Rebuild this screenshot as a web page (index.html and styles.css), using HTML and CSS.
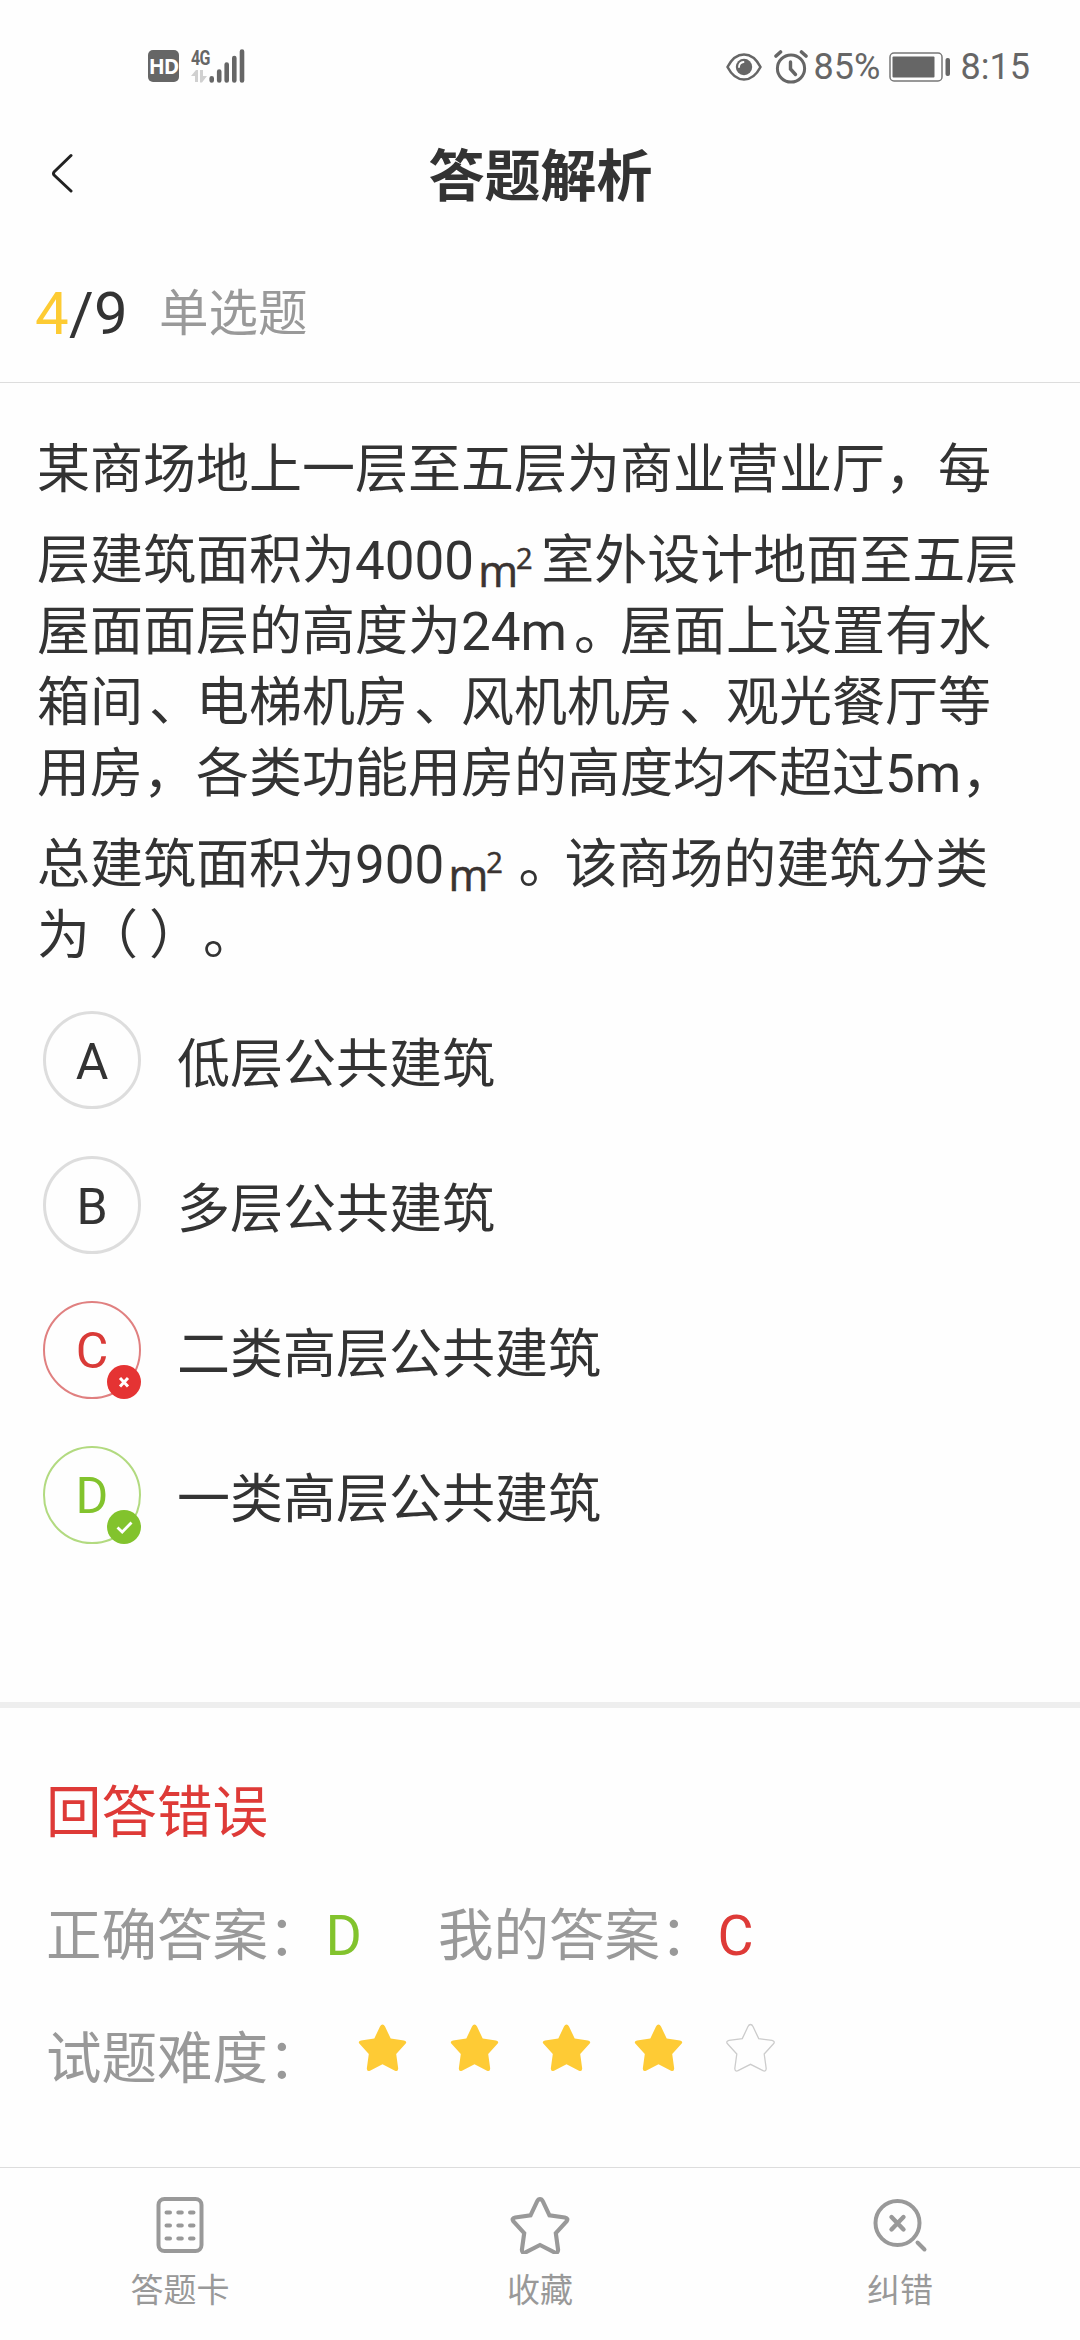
FILE: index.html
```html
<!DOCTYPE html>
<html lang="zh-CN">
<head>
<meta charset="utf-8">
<title>答题解析</title>
<link rel="stylesheet" href="styles.css">
</head>
<body>
<svg width="0" height="0" class="defs">
  <defs>
    <path id="star" d="M24.500 1.500 Q26 1.500 27 3.500 L32.700 15.600 L46 17.400 Q49.500 18.200 47.500 20.800 L38.200 31 L40.200 45.500 Q40 49 37 47.700 L24.500 41.300 L12 47.700 Q9 49 8.800 45.500 L10.800 31 L1.500 20.800 Q-.5 18.200 3 17.400 L16.300 15.600 L22 3.500 Q23 1.500 24.500 1.500Z"/>
  </defs>
</svg>
<div class="screen">
  <header class="status">
    <div class="status-left">
      <span class="hd">HD</span>
      <div class="network">
        <span class="net-label">4G</span>
        <svg width="16" height="13" viewBox="0 0 16 13" fill="#d0d0d0"><path d="M7 0V12H4V6H0L5 0ZM9 0H12V6H16L11 12.500H9Z"/></svg>
      </div>
      <svg class="bars" width="36" height="34" viewBox="0 0 36 34" stroke="#666" stroke-width="4.600" stroke-linecap="round"><path d="M2.700 29.300V31.500M10.200 22.500V31.500M17.700 15.500V31.500M25.300 9V31.500M33 2.500V31.500"/></svg>
    </div>
    <div class="status-right">
      <svg class="eye" width="36" height="28" viewBox="0 0 36 28"><path d="M1.500 14Q8 1.500 18 1.500T34.500 14Q28 26.500 18 26.500T1.500 14Z" fill="none" stroke="#666" stroke-width="2.600" stroke-linejoin="round"/><circle cx="18" cy="14" r="8.200" fill="#666"/><path d="M13 14Q13.200 9.500 17.500 9" fill="none" stroke="#fff" stroke-width="1.800" stroke-linecap="round"/></svg>
      <svg class="alarm" width="34" height="34" viewBox="0 0 34 34" fill="none" stroke="#666" stroke-width="3" stroke-linecap="round"><circle cx="17" cy="18.500" r="13.600"/><path d="M16.500 12V19L21.500 24.500" stroke-width="3.400"/><path d="M2 6L6.500 2M27.500 2L32 6" stroke-width="3.600"/></svg>
      <span class="battery-text">85%</span>
      <svg class="battery" width="62" height="30" viewBox="0 0 62 30"><rect x="1" y="1" width="52" height="28" rx="4" fill="none" stroke="#777" stroke-width="1.500"/><rect x="3.500" y="4.500" width="42" height="21" rx="1" fill="#666"/><rect x="56.500" y="6" width="4.500" height="18" rx="2" fill="#666"/></svg>
      <span>8:15</span>
    </div>
  </header>

  <nav class="titlebar">
    <svg class="back" width="22" height="40" viewBox="0 0 22 40" fill="none" stroke="#222" stroke-width="3" stroke-linecap="round" stroke-linejoin="round"><path d="M20 2.500L3 19Q2 20.500 3 22L20 38"/></svg>
    <h1>答题解析</h1>
  </nav>

  <section class="progress">
    <span class="count"><span class="current">4</span>/9</span>
    <span class="kind">单选题</span>
  </section>

  <main class="question">
    <p class="stem">
      <span class="line">某商场地上一层至五层为商业营业厅，每</span>
      <span class="line tall">层建筑面积为4000<span class="unit">m<sup>2</sup></span>室外设计地面至五层</span>
      <span class="line">屋面面层的高度为24m<span class="stop">。</span>屋面上设置有水</span>
      <span class="line">箱间<span class="pause">、</span>电梯机房<span class="pause">、</span>风机机房<span class="pause">、</span>观光餐厅等</span>
      <span class="line">用房，各类功能用房的高度均不超过5m，</span>
      <span class="line tall">总建筑面积为900<span class="unit">m<sup>2</sup></span><span class="stop">。</span>该商场的建筑分类</span>
      <span class="line">为<span class="open">（</span><span class="close">）</span><span class="stop">。</span></span>
    </p>
    <ul class="options">
      <li><span class="mark">A</span><span class="choice">低层公共建筑</span></li>
      <li><span class="mark">B</span><span class="choice">多层公共建筑</span></li>
      <li><span class="mark wrong">C<svg class="badge" viewBox="0 0 34 34"><circle cx="17" cy="17" r="17" fill="#e53333"/><path d="M13 13L21 21.500M21 13L13 21.500" stroke="#fff" stroke-width="3"/></svg></span><span class="choice">二类高层公共建筑</span></li>
      <li><span class="mark right">D<svg class="badge" viewBox="0 0 34 34"><circle cx="17" cy="17" r="17" fill="#82c32d"/><path d="M10.500 17.500L15.200 22L24.500 12.500" fill="none" stroke="#fff" stroke-width="2.800"/></svg></span><span class="choice">一类高层公共建筑</span></li>
    </ul>
  </main>

  <section class="result">
    <div class="row red">回答错误</div>
    <div class="row answers"><span>正确答案：<b class="green">D</b></span><span>我的答案：<b class="red">C</b></span></div>
    <div class="row difficulty"><span>试题难度：</span>
      <div class="stars">
        <svg viewBox="0 0 49 50"><use href="#star"/></svg>
        <svg viewBox="0 0 49 50"><use href="#star"/></svg>
        <svg viewBox="0 0 49 50"><use href="#star"/></svg>
        <svg viewBox="0 0 49 50"><use href="#star"/></svg>
        <svg class="empty" viewBox="0 0 49 50"><use href="#star"/></svg>
      </div>
    </div>
  </section>

  <footer class="tabs">
    <div class="tab">
      <svg width="60" height="58" viewBox="0 0 60 58" fill="none" stroke="#999" stroke-width="4"><rect x="8.500" y="3" width="43" height="52" rx="6"/><path d="M16.500 16.500h3.500M28.300 16.500h3.500M40 16.500h3.500M16.500 29.500h3.500M28.300 29.500h3.500M40 29.500h3.500M16.500 42.500h3.500M28.300 42.500h3.500M40 42.500h3.500" stroke-linecap="round"/></svg>
      <span>答题卡</span>
    </div>
    <div class="tab">
      <svg width="60" height="58" viewBox="-1.500 -1.200 52 50.300" fill="none" stroke="#999" stroke-width="3.600"><use href="#star"/></svg>
      <span>收藏</span>
    </div>
    <div class="tab">
      <svg width="60" height="58" viewBox="0 0 60 58" fill="none" stroke="#999" stroke-width="4" stroke-linecap="round"><circle cx="27.500" cy="27" r="22"/><path d="M21.500 21L33.500 33.500M33.500 21L21.500 33.500" stroke-width="4.400"/><path d="M47.500 46.500L54.500 53.500"/></svg>
      <span>纠错</span>
    </div>
  </footer>
</div>
</body>
</html>
```
FILE: styles.css
```css
* { box-sizing: border-box; margin: 0; padding: 0; }
body {
  background: #fefefe;
  color: #333;
  font-family: Roboto, "Noto Sans CJK SC", sans-serif;
  text-spacing-trim: space-all;
}
.defs { position: absolute; }
svg { display: block; flex: none; }
.screen { width: 1080px; height: 2340px; display: flex; flex-direction: column; overflow: hidden; }

.status {
  height: 112px;
  padding: 20px 50px 0 148px;
  display: flex;
  justify-content: space-between;
  align-items: center;
  color: #666;
  font: 36px/1 Roboto, sans-serif;
}
.status-left, .status-right { display: flex; align-items: center; }
.status-right { padding-top: 2px; }
.hd {
  width: 31px; height: 32px;
  border-radius: 5px;
  background: #666; color: #fff;
  font: bold 21px/32px "Open Sans", sans-serif;
  letter-spacing: -1px;
  text-align: center;
}
.network { margin-left: 12px; width: 18px; display: flex; flex-direction: column; gap: 4px; }
.net-label { font: bold 20px/16px Roboto, sans-serif; letter-spacing: -1px; transform: scaleX(.8); transform-origin: left; }
.alarm { margin: 0 6px 0 12px; }
.battery { margin: 0 10px 0 9px; }
.battery-text { width: 66px; }

.titlebar { height: 127px; display: flex; align-items: center; padding: 0 51px; }
.back { margin-bottom: 6px; }
h1 { flex: 1; margin: 2px 21px 0 0; text-align: center; font-size: 56px; line-height: 80px; font-weight: 700; }

.progress { height: 144px; padding: 7px 35px 0; display: flex; align-items: center; gap: 31px; border-bottom: 1px solid #ddd; }
.count { font-size: 60px; line-height: 80px; letter-spacing: .3px; }
.current { color: #fdcb33; }
.kind { font-size: 49.500px; line-height: 80px; color: #999; }

.question { height: 1319px; padding: 52px 37px 0; font-size: 53px; }
.stem { line-height: 71px; white-space: nowrap; }
.line { display: block; height: 71px; }
.tall { height: 91px; padding-top: 20px; }
.stop { margin: 0 -7px 0 7px; }
.pause { margin: 0 -6px 0 6px; }
.open { margin: 0 5px 0 -5px; }
.close { margin: 0 -6px 0 6px; }
.unit {
  display: inline-block; width: 67px; height: 71px;
  padding-left: 4px;
  vertical-align: top;
  font: 43px/90px "Open Sans", sans-serif;
  color: #3a3331;
  -webkit-text-stroke: .6px #3a3331;
}
.unit sup { font-size: 29px; line-height: 0; vertical-align: 18px; margin-left: -2px; }
.options { list-style: none; padding: 39px 0 0 6px; }
.options li { height: 98px; margin-bottom: 47px; display: flex; align-items: center; gap: 36px; line-height: 98px; }
.choice { padding-top: 10px; }
.mark {
  position: relative;
  width: 98px; height: 98px;
  border: 3px solid #ddd; border-radius: 50%;
  font-size: 50px; line-height: 97px; text-align: center;
}
.wrong { border: 2px solid #e08080; color: #d93a37; }
.right { border: 2px solid #b2da80; color: #82c32d; }
.badge { position: absolute; right: -2px; bottom: -2px; width: 34px; height: 34px; }

.result { height: 465px; border-top: 6px solid #eee; padding: 65px 46px 0; font-size: 55.500px; color: #999; }
.row { height: 123px; line-height: 82px; display: flex; white-space: nowrap; }
.answers { gap: 76px; }
.red { color: #de3a37; }
.green { color: #82c32d; }
b { font-weight: 400; margin-left: 2px; }
.stars { display: flex; gap: 43px; margin: 4px 0 0 34px; }
.stars svg { width: 49px; height: 50px; fill: #fecb35; }
.stars .empty { fill: none; stroke: #ccc; stroke-width: 1.300px; overflow: visible; }

.tabs { height: 173px; border-top: 1px solid #ddd; display: grid; grid-template-columns: repeat(3, 1fr); }
.tab { display: flex; flex-direction: column; align-items: center; padding-top: 28px; color: #999; font-size: 33px; line-height: 48px; gap: 13px; }
```
